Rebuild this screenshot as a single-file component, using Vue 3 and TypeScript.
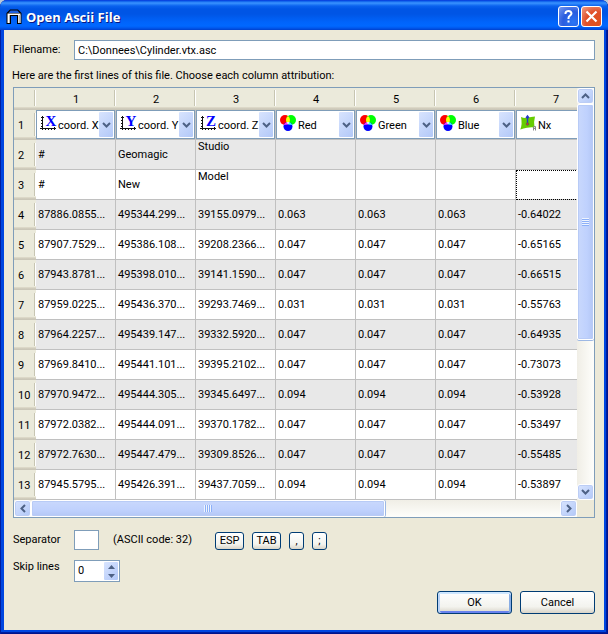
<script setup lang="ts">
import { ref } from 'vue'

type Icon = 'X' | 'Y' | 'Z' | 'rgb' | 'normal'
interface Column { label: string; icon: Icon }

const columns: Column[] = [
  { label: 'coord. X', icon: 'X' },
  { label: 'coord. Y', icon: 'Y' },
  { label: 'coord. Z', icon: 'Z' },
  { label: 'Red', icon: 'rgb' },
  { label: 'Green', icon: 'rgb' },
  { label: 'Blue', icon: 'rgb' },
  { label: 'Nx', icon: 'normal' },
]

const rows: string[][] = [
  ['#', 'Geomagic', 'Studio', '', '', '', ''],
  ['#', 'New', 'Model', '', '', '', ''],
  ['87886.0855...', '495344.299...', '39155.0979...', '0.063', '0.063', '0.063', '-0.64022'],
  ['87907.7529...', '495386.108...', '39208.2366...', '0.047', '0.047', '0.047', '-0.65165'],
  ['87943.8781...', '495398.010...', '39141.1590...', '0.047', '0.047', '0.047', '-0.66515'],
  ['87959.0225...', '495436.370...', '39293.7469...', '0.031', '0.031', '0.031', '-0.55763'],
  ['87964.2257...', '495439.147...', '39332.5920...', '0.047', '0.047', '0.047', '-0.64935'],
  ['87969.8410...', '495441.101...', '39395.2102...', '0.047', '0.047', '0.047', '-0.73073'],
  ['87970.9472...', '495444.305...', '39345.6497...', '0.094', '0.094', '0.094', '-0.53928'],
  ['87972.0382...', '495444.091...', '39370.1782...', '0.047', '0.047', '0.047', '-0.53497'],
  ['87972.7630...', '495447.479...', '39309.8526...', '0.047', '0.047', '0.047', '-0.55485'],
  ['87945.5795...', '495426.391...', '39437.7059...', '0.094', '0.094', '0.094', '-0.53897'],
]

const filename = ref('C:\\Donnees\\Cylinder.vtx.asc')
const separator = ref(' ')
const skipLines = ref('0')

function step(delta: number): void {
  skipLines.value = String(Math.max(0, Number(skipLines.value) + delta))
}
</script>

<template>
  <main class="window">
    <header class="titlebar">
      <svg class="app-icon" viewBox="0 0 16 16" aria-hidden="true">
        <path d="M4 .5h8L15.500 4v11h-4.500V7h-6v8H.5V4z" fill="#000" />
        <path d="M4.500 1.500h7L13.500 4h-11z" fill="#1c5fe0" />
        <path d="M1.500 4.500h13V14H12V6H4v8H1.500z" fill="#fff" />
        <path d="M12.500 6h2v8h-2zM3 6h1v8H3z" fill="#b8b8b8" />
      </svg>
      <h1>Open Ascii File</h1>
      <button class="caption help" type="button" aria-label="Help">
        <svg viewBox="0 0 19 19" aria-hidden="true">
          <path d="M6.500 7V6q.5-2 3-2t3 2.300q0 1.500-1.500 2.400T9.500 11v1M9.500 13.500v2" fill="none" stroke="#fff" stroke-width="2" />
        </svg>
      </button>
      <button class="caption close" type="button" aria-label="Close">
        <svg viewBox="0 0 19 19" aria-hidden="true">
          <path d="M4.500 4.500l10 10M14.500 4.500l-10 10" stroke="#fff" stroke-width="2.200" />
        </svg>
      </button>
    </header>

    <form class="body" @submit.prevent>
      <div class="row file-row">
        <label class="name" for="filename">Filename:</label>
        <input id="filename" v-model="filename" class="field grow" type="text" />
      </div>
      <p class="hint">Here are the first lines of this file. Choose each column attribution:</p>

      <div class="frame">
        <div class="viewport">
          <table>
            <colgroup>
              <col class="col-index" />
              <col v-for="(c, i) in columns" :key="i" class="col-data" />
            </colgroup>
            <thead>
              <tr>
                <td class="corner"></td>
                <th v-for="(c, i) in columns" :key="i" scope="col">{{ i + 1 }}</th>
              </tr>
            </thead>
            <tbody>
              <tr>
                <th scope="row">1</th>
                <td v-for="(c, i) in columns" :key="i" class="combo-cell">
                  <div class="combo">
                    <select :aria-label="'Column ' + (i + 1)">
                      <option>{{ c.label }}</option>
                    </select>
                    <svg v-if="c.icon === 'rgb'" class="icon" viewBox="0 0 16 16" aria-hidden="true">
                      <circle cx="5" cy="5" r="5" fill="#f00" />
                      <circle cx="11" cy="5" r="5" fill="#0f0" />
                      <circle cx="8" cy="11.500" r="4.500" fill="#00f" />
                      <path d="M8 1a5 5 0 0 1 0 8a5 5 0 0 1 0-8" fill="#ff0" />
                      <path d="M3.500 10q2-3 4.500-3v2.500z" fill="#f3f" />
                      <path d="M12.500 10q-2-3-4.500-3v2.500z" fill="#3ff" />
                      <path d="M6.300 7.300h3.400L8 9.300z" fill="#fff" />
                    </svg>
                    <svg v-else-if="c.icon === 'normal'" class="icon" viewBox="0 0 16 16" aria-hidden="true">
                      <path d="M1 2q3 1.500 6.500.8T15 1.500q-1.500 5-.5 11-4-.5-7.500.3T.3 14.500Q2.500 9 1 2z" fill="#6c0" />
                      <path d="M7.500 2v6M6 3l1.500-2L9 3" fill="none" stroke="#2438c8" stroke-width="1.400" />
                      <circle cx="7.500" cy="9" r="1.300" fill="#c33" stroke="#555" stroke-width=".6" />
                      <path d="M13.500 15.500v-4h2v4M13.500 13.500h2" fill="none" stroke="#888" />
                    </svg>
                    <svg v-else class="icon" viewBox="0 0 16 16" aria-hidden="true">
                      <path d="M2.500 1v14M0 13.500h16M1 2.500h3M1 5.500h1M1 8.500h1M1 11.500h1M5.500 13v2M8.500 13v2M11.500 13v2M14.500 12v3" fill="none" stroke="#111" />
                      <text x="11" y="11" text-anchor="middle">{{ c.icon }}</text>
                    </svg>
                    <span class="drop">
                      <svg viewBox="0 0 9 6" aria-hidden="true"><path d="M1 1l3.500 3.500L8 1" fill="none" stroke="#4d6185" stroke-width="2" /></svg>
                    </span>
                  </div>
                </td>
              </tr>
              <tr v-for="(r, ri) in rows" :key="ri">
                <th scope="row">{{ ri + 2 }}</th>
                <td
                  v-for="(v, ci) in r"
                  :key="ci"
                  :class="{ top: ri < 2 && ci === 2, current: ri === 1 && ci === 6 }"
                >{{ v }}</td>
              </tr>
            </tbody>
          </table>
        </div>

        <div class="vbar">
          <button class="sb" type="button" aria-label="Scroll up">
            <svg viewBox="0 0 9 6" aria-hidden="true"><path d="M1 5l3.500-3.500L8 5" fill="none" stroke="#4d6185" stroke-width="2" /></svg>
          </button>
          <div class="track">
            <div class="thumb"><i class="grip"></i></div>
          </div>
          <button class="sb" type="button" aria-label="Scroll down">
            <svg viewBox="0 0 9 6" aria-hidden="true"><path d="M1 1l3.500 3.500L8 1" fill="none" stroke="#4d6185" stroke-width="2" /></svg>
          </button>
        </div>

        <div class="hbar">
          <button class="sb" type="button" aria-label="Scroll left">
            <svg class="side" viewBox="0 0 6 9" aria-hidden="true"><path d="M5 1L1.500 4.500 5 8" fill="none" stroke="#4d6185" stroke-width="2" /></svg>
          </button>
          <div class="track">
            <div class="thumb"><i class="grip"></i></div>
          </div>
          <button class="sb" type="button" aria-label="Scroll right">
            <svg class="side" viewBox="0 0 6 9" aria-hidden="true"><path d="M1 1l3.500 3.500L1 8" fill="none" stroke="#4d6185" stroke-width="2" /></svg>
          </button>
        </div>
      </div>

      <div class="row sep-row">
        <label class="name" for="separator">Separator</label>
        <input id="separator" v-model="separator" class="field sep" type="text" maxlength="1" />
        <span class="code">(ASCII code: 32)</span>
        <div class="chips">
          <button class="btn chip wide" type="button">ESP</button>
          <button class="btn chip wide" type="button">TAB</button>
          <button class="btn chip" type="button">,</button>
          <button class="btn chip" type="button">;</button>
        </div>
      </div>

      <div class="row skip-row">
        <label class="name" for="skip">Skip lines</label>
        <div class="spin">
          <input id="skip" v-model="skipLines" type="text" inputmode="numeric" />
          <div class="steps">
            <button type="button" aria-label="Increase" @click="step(1)">
              <svg viewBox="0 0 7 4" aria-hidden="true"><path d="M0 4l3.500-4L7 4z" fill="#4d6185" /></svg>
            </button>
            <button type="button" aria-label="Decrease" @click="step(-1)">
              <svg viewBox="0 0 7 4" aria-hidden="true"><path d="M0 0l3.500 4L7 0z" fill="#4d6185" /></svg>
            </button>
          </div>
        </div>
      </div>

      <div class="actions">
        <button class="btn action default" type="submit">OK</button>
        <button class="btn action" type="button">Cancel</button>
      </div>
    </form>
  </main>
</template>

<style>
body {
  background: #b9c8d8;
}
</style>

<style scoped>
* {
  box-sizing: border-box;
}
.window {
  display: flex;
  flex-direction: column;
  min-height: 100vh;
  padding: 0 4px 4px;
  border-radius: 7px 7px 0 0;
  background: #0046e0;
  box-shadow: inset 1px 0 #001ea0, inset -1px -1px #00138c, inset -2px -2px #001ea0, inset 0 -1px #00138c;
  color: #000;
  font: 11px/14px Roboto, "DejaVu Sans Condensed", sans-serif;
}
button, input, select {
  margin: 0;
  padding: 0;
  color: inherit;
  font: inherit;
}
svg {
  display: block;
}
.titlebar {
  display: flex;
  align-items: center;
  height: 30px;
  margin: 0 -4px;
  padding: 3px 6px 0;
  border-radius: 7px 7px 0 0;
  background: linear-gradient(#0831d9 0, #0a5be8 1px, #3a93ff 3px, #0a62ee 6px, #0055e5 9px, #0055e5 14px, #0064fb 22px, #0068ff 26px, #0058ee 28px, #0040cc 30px);
}
.app-icon {
  width: 16px;
  height: 16px;
}
h1 {
  flex: 1;
  margin: 0 0 0 4px;
  color: #fff;
  font: bold 13px/18px "Open Sans", sans-serif;
  text-shadow: 1px 1px #0a1883;
}
.caption {
  width: 21px;
  height: 21px;
  border: 1px solid #fff;
  border-radius: 3px;
  background: radial-gradient(circle at 75% 80%, #2a75f5, #2a5cdf 50%, #7a9bf0 100%);
}
.caption svg {
  width: 19px;
  height: 19px;
}
.close {
  margin-left: 2px;
  background: radial-gradient(circle at 75% 80%, #e0521e, #e0502a 50%, #f0a088 100%);
}
.body {
  display: flex;
  flex: 1;
  flex-direction: column;
  padding: 10px 9px 16px;
  background: #ece9d8;
}
.row {
  display: flex;
  align-items: center;
}
.name {
  width: 61px;
}
.field {
  height: 20px;
  padding: 0 3px;
  border: 1px solid #7f9db9;
  background: #fff;
  outline: 0;
}
.grow {
  flex: 1;
  min-width: 0;
}
.hint {
  margin: 9px 0 4px -1px;
}
.frame {
  display: grid;
  grid-template: minmax(0, 1fr) 17px / minmax(0, 1fr) 17px;
  border: 1px solid #7f9db9;
}
.viewport {
  overflow: hidden;
  background: #fff;
}
table {
  width: 582px;
  border-collapse: separate;
  border-spacing: 0;
  table-layout: fixed;
}
.col-index {
  width: 22px;
}
.col-data {
  width: 80px;
}
td, th {
  overflow: hidden;
  padding: 0 0 0 2px;
  font-weight: normal;
  text-align: left;
  white-space: nowrap;
}
thead td, thead th {
  height: 22px;
  padding: 2px 0 0;
  background:
    linear-gradient(#c7c5b2, #c7c5b2) right 1px top 2px / 1px 16px no-repeat,
    linear-gradient(#fff, #fff) right 0 top 2px / 1px 16px no-repeat,
    linear-gradient(#ebeadb 19px, #e2decd 19px, #d6d2c2 20px, #cbc7b8 21px);
  text-align: center;
}
tbody th {
  height: 30px;
  padding: 2px 0 0 4px;
  background:
    linear-gradient(#c7c5b2, #c7c5b2) right 1px top 3px / 1px 23px no-repeat,
    linear-gradient(#fff, #fff) right 0 top 3px / 1px 23px no-repeat,
    linear-gradient(#ebeadb 27px, #e2decd 27px, #d6d2c2 28px, #cbc7b8 29px);
}
tbody td {
  height: 30px;
  border: solid #c0c0c0;
  border-width: 0 1px 1px 0;
}
tbody tr:nth-child(even) td {
  background: #e8e8e8;
}
td.top {
  vertical-align: top;
}
td.current {
  outline: 1px dotted #000;
  outline-offset: -1px;
}
td.combo-cell {
  padding: 0;
}
.combo {
  position: relative;
  height: 29px;
}
select {
  width: 100%;
  height: 29px;
  padding: 2px 14px 0 21px;
  border: 1px solid #7f9db9;
  border-radius: 0;
  background: #fff;
  appearance: none;
  text-overflow: clip;
}
.icon {
  position: absolute;
  top: 5px;
  left: 4px;
  width: 16px;
  height: 16px;
  overflow: visible;
  pointer-events: none;
}
.icon text {
  fill: #00f;
  font: bold 15px "Liberation Serif", serif;
}
.drop {
  position: absolute;
  top: 2px;
  right: 2px;
  display: grid;
  place-items: center;
  width: 14px;
  height: 25px;
  border-radius: 1px;
  background: linear-gradient(135deg, #d8e4fe, #b2c8f8);
  pointer-events: none;
}
.drop svg, .sb svg {
  width: 9px;
  height: 6px;
}
.vbar, .hbar {
  display: flex;
}
.vbar {
  flex-direction: column;
  background: linear-gradient(90deg, #f0eee6, #fefefb);
}
.hbar {
  background: linear-gradient(#f0eee6, #fefefb);
}
.sb {
  display: grid;
  flex: none;
  place-items: center;
  width: 17px;
  height: 16px;
  border: 1px solid #fff;
  border-radius: 3px;
  background: linear-gradient(135deg, #d8e4fe, #b2c8f8);
  box-shadow: inset 0 0 0 1px #bccdf5;
}
.hbar .sb {
  height: 17px;
}
.sb .side {
  width: 6px;
  height: 9px;
}
.track {
  display: flex;
  flex: 1;
}
.vbar .track {
  flex-direction: column;
}
.thumb {
  display: grid;
  place-items: center;
  border: 1px solid #fff;
  border-radius: 2px;
}
.vbar .thumb {
  height: 62%;
  background: linear-gradient(90deg, #c9d8fc, #bfd1fd 60%, #b4c7f5);
  box-shadow: inset 0 0 0 1px #b8cbf6, 0 1px #9db8e4;
}
.hbar .thumb {
  width: 67%;
  background: linear-gradient(#c9d8fc, #bfd1fd 60%, #b4c7f5);
  box-shadow: inset 0 0 0 1px #b8cbf6, 1px 0 #9db8e4;
}
.grip {
  width: 7px;
  height: 8px;
  background: repeating-linear-gradient(#eef4fe 0 1px, #8cb0f8 1px 2px);
}
.hbar .grip {
  width: 8px;
  height: 7px;
  background: repeating-linear-gradient(90deg, #eef4fe 0 1px, #8cb0f8 1px 2px);
}
.sep-row {
  margin-top: 12px;
}
.sep {
  width: 25px;
}
.code {
  width: 88px;
  margin-left: 14px;
  white-space: nowrap;
}
.chips {
  display: flex;
  gap: 8px;
  margin: 2px 0 0 14px;
}
.btn {
  border: 1px solid #003c74;
  border-radius: 3px;
  background: linear-gradient(#fff, #f3f3ee 70%, #d9d4c8);
}
.chip {
  width: 15px;
  height: 18px;
}
.wide {
  width: 29px;
}
.skip-row {
  align-items: flex-start;
  margin-top: 10px;
}
.spin {
  display: flex;
  width: 46px;
  height: 22px;
  padding: 1px;
  border: 1px solid #7f9db9;
  background: #fff;
}
.spin input {
  flex: 1;
  min-width: 0;
  padding-left: 2px;
  border: 0;
  background: none;
  outline: 0;
}
.steps {
  width: 14px;
  border-radius: 1px;
  background: linear-gradient(135deg, #d8e4fe, #b2c8f8);
}
.steps button {
  display: grid;
  place-items: center;
  width: 100%;
  height: 9px;
  border: 0;
  background: none;
}
.steps svg {
  width: 7px;
  height: 4px;
}
.actions {
  display: flex;
  justify-content: flex-end;
  gap: 8px;
  margin-top: auto;
}
.action {
  width: 75px;
  height: 23px;
}
.default {
  box-shadow: inset 0 2px #cee7ff, inset 2px 0 #bcd4f6, inset -2px 0 #89ade4, inset 0 -2px #6982ee;
}
</style>
